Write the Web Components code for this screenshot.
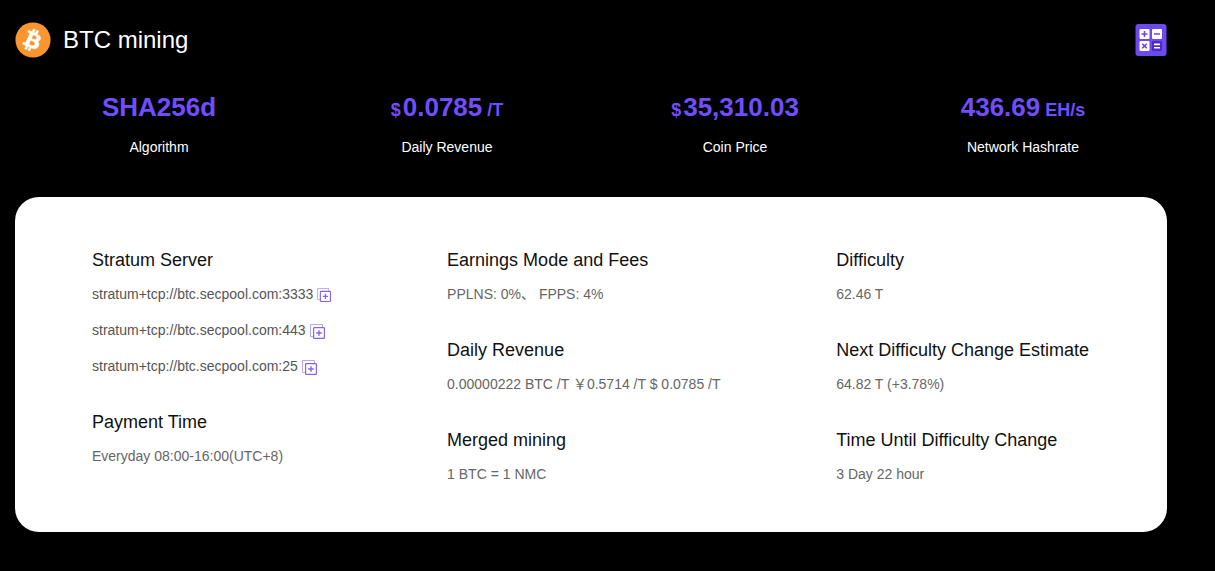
<!DOCTYPE html>
<html lang="en">
<head>
<meta charset="utf-8">
<meta name="viewport" content="width=device-width, initial-scale=1">
<title>BTC mining</title>
<style>
  body {
    margin: 0;
    background: #000;
    color: #fff;
    font-family: "Liberation Sans", Arial, "Noto Sans CJK SC", sans-serif;
    font-size: 14px;
  }
</style>
</head>
<body>
<mining-page>
  <mining-header slot="header">BTC mining</mining-header>
  <stat-item slot="stats" label="Algorithm">SHA256d</stat-item>
  <stat-item slot="stats" label="Daily Revenue" prefix="$" unit="/T">0.0785</stat-item>
  <stat-item slot="stats" label="Coin Price" prefix="$">35,310.03</stat-item>
  <stat-item slot="stats" label="Network Hashrate" unit="EH/s">436.69</stat-item>

  <info-column>
    <info-block heading="Stratum Server">
      <server-line small>stratum+tcp://btc.secpool.com:3333</server-line>
      <server-line>stratum+tcp://btc.secpool.com:443</server-line>
      <server-line>stratum+tcp://btc.secpool.com:25</server-line>
    </info-block>
    <info-block heading="Payment Time">Everyday 08:00-16:00(UTC+8)</info-block>
  </info-column>
  <info-column>
    <info-block heading="Earnings Mode and Fees">PPLNS: 0%、 FPPS: 4%</info-block>
    <info-block heading="Daily Revenue">0.00000222 BTC /T ￥0.5714 /T $ 0.0785 /T</info-block>
    <info-block heading="Merged mining">1 BTC = 1 NMC</info-block>
  </info-column>
  <info-column>
    <info-block heading="Difficulty">62.46 T</info-block>
    <info-block heading="Next Difficulty Change Estimate">64.82 T (+3.78%)</info-block>
    <info-block heading="Time Until Difficulty Change">3 Day 22 hour</info-block>
  </info-column>
</mining-page>

<script>
const define = (name, render, setup) => {
  customElements.define(name, class extends HTMLElement {
    constructor() {
      super();
      this.attachShadow({ mode: 'open' });
    }
    connectedCallback() {
      if (this.shadowRoot.childNodes.length) return;
      const template = document.createElement('template');
      template.innerHTML = render(this);
      this.shadowRoot.append(template.content.cloneNode(true));
      if (setup) setup(this);
    }
  });
};

define('mining-page', () => `
  <style>
    :host { display: block; padding: 22px 48px 39px 15px; }
    .stats { display: grid; grid-template-columns: repeat(4, 1fr); margin: 33px 0 40px; }
    .card {
      display: flex; flex-wrap: wrap; justify-content: space-between; column-gap: 32px;
      padding: 47px 78px 18px 77px; border-radius: 24px; background: #fff;
    }
  </style>
  <slot name="header"></slot>
  <main>
    <section class="stats"><slot name="stats"></slot></section>
    <section class="card"><slot></slot></section>
  </main>
`);

define('mining-header', () => `
  <style>
    :host { display: block; }
    header { display: flex; align-items: center; gap: 12px; }
    h1 { flex: 1; margin: 0; font-size: 24px; font-weight: 400; line-height: 36px; }
    svg { display: block; }
    a { display: block; }
  </style>
  <header>
    <svg width="36" height="36" viewBox="0 0 32 32" aria-hidden="true">
      <circle cx="16" cy="16" r="15.6" fill="#f99630"/>
      <path fill="#fff" stroke="#fff" stroke-width=".4" transform="translate(-.9 0) rotate(10 16 16)" d="M23.189 14.02c.314-2.096-1.283-3.223-3.465-3.975l.708-2.84-1.728-.43-.69 2.765c-.454-.114-.92-.22-1.385-.326l.695-2.783L15.596 6l-.708 2.839c-.376-.086-.746-.17-1.104-.26l.002-.009-2.384-.595-.46 1.846s1.283.294 1.256.312c.7.175.826.638.805 1.006l-.806 3.235c.048.012.11.03.18.057l-.183-.045-1.13 4.532c-.086.212-.303.531-.793.41.018.025-1.256-.313-1.256-.313l-.858 1.978 2.25.561c.418.105.828.215 1.231.318l-.715 2.872 1.727.43.708-2.84c.472.127.93.245 1.378.357l-.706 2.828 1.728.43.715-2.866c2.948.558 5.164.333 6.097-2.333.752-2.146-.037-3.385-1.588-4.192 1.13-.26 1.98-1.003 2.207-2.538zm-3.95 5.538c-.533 2.147-4.148.986-5.32.695l.95-3.805c1.172.293 4.929.872 4.37 3.11zm.535-5.569c-.487 1.953-3.495.96-4.47.717l.86-3.45c.975.243 4.118.696 3.61 2.733z"/>
    </svg>
    <h1><slot></slot></h1>
    <a href="#calculator" aria-label="Mining calculator">
      <svg width="32" height="32" viewBox="0 0 32 32" aria-hidden="true">
        <rect x=".5" width="31" height="32" rx="3" fill="#6d4af0"/>
        <g fill="#fff">
          <rect x="4.5" y="5" width="10" height="10" rx="1"/>
          <rect x="17" y="5" width="10" height="10" rx="1"/>
          <rect x="4.5" y="17" width="10" height="10" rx="1"/>
        </g>
        <rect x="17" y="17" width="10" height="10" rx="1" fill="#4b2bc4"/>
        <g fill="none" stroke="#6848dc" stroke-width="1.6">
          <path d="M9.5 7v6M6.5 10h6M19 10h6M7.2 19.7l4.6 4.6M11.8 19.7l-4.6 4.6"/>
          <path stroke="#fff" d="M19 20.4h6M19 23.8h6"/>
        </g>
      </svg>
    </a>
  </header>
`);

define('stat-item', el => `
  <style>
    :host { display: block; text-align: center; }
    .value { color: #704eff; font-size: 26px; font-weight: 700; line-height: 32px; }
    .prefix, .unit { font-size: 18px; line-height: 1; }
    .prefix { margin-right: 2px; }
    .unit { margin-left: 5px; }
    .label { margin-top: 14px; font-size: 14px; line-height: 20px; }
  </style>
  <div class="value">${el.hasAttribute('prefix') ? `<span class="prefix">${el.getAttribute('prefix')}</span>` : ''}<slot></slot>${el.hasAttribute('unit') ? `<span class="unit">${el.getAttribute('unit')}</span>` : ''}</div>
  <div class="label">${el.getAttribute('label')}</div>
`);

define('info-column', () => `
  <style>:host { display: block; }</style>
  <slot></slot>
`);

define('info-block', el => `
  <style>
    :host { display: block; margin-bottom: 22px; }
    h2 { margin: 0; color: #111; font-size: 18px; font-weight: 400; line-height: 32px; }
    .body { color: #666; font-size: 14px; line-height: 36px; }
  </style>
  <h2>${el.getAttribute('heading')}</h2>
  <div class="body"><slot></slot></div>
`);

define('server-line', el => {
  const size = el.hasAttribute('small') ? 14 : 15;
  return `
  <style>
    :host { display: flex; align-items: center; gap: 4px; height: 36px; color: #555; }
    button { display: block; margin: 2px 0 0; padding: 0; border: 0; background: none; cursor: pointer; }
    svg { display: block; }
  </style>
  <span><slot></slot></span>
  <button type="button" aria-label="Copy address">
    <svg width="${size}" height="${size}" viewBox="0 0 15 15" fill="none" aria-hidden="true">
      <path d="M3 12.5H.5V.5h12V3" stroke="#b9a6fb"/>
      <rect x="3.6" y="3.6" width="10.8" height="10.8" rx=".6" stroke="#8464ee" stroke-width="1.2"/>
      <path d="M9 6.2v5.6M6.2 9h5.6" stroke="#8464ee" stroke-width="1.4"/>
    </svg>
  </button>
`;
}, el => {
  el.shadowRoot.querySelector('button').addEventListener('click', () => {
    navigator.clipboard?.writeText(el.textContent.trim());
  });
});
</script>
</body>
</html>
